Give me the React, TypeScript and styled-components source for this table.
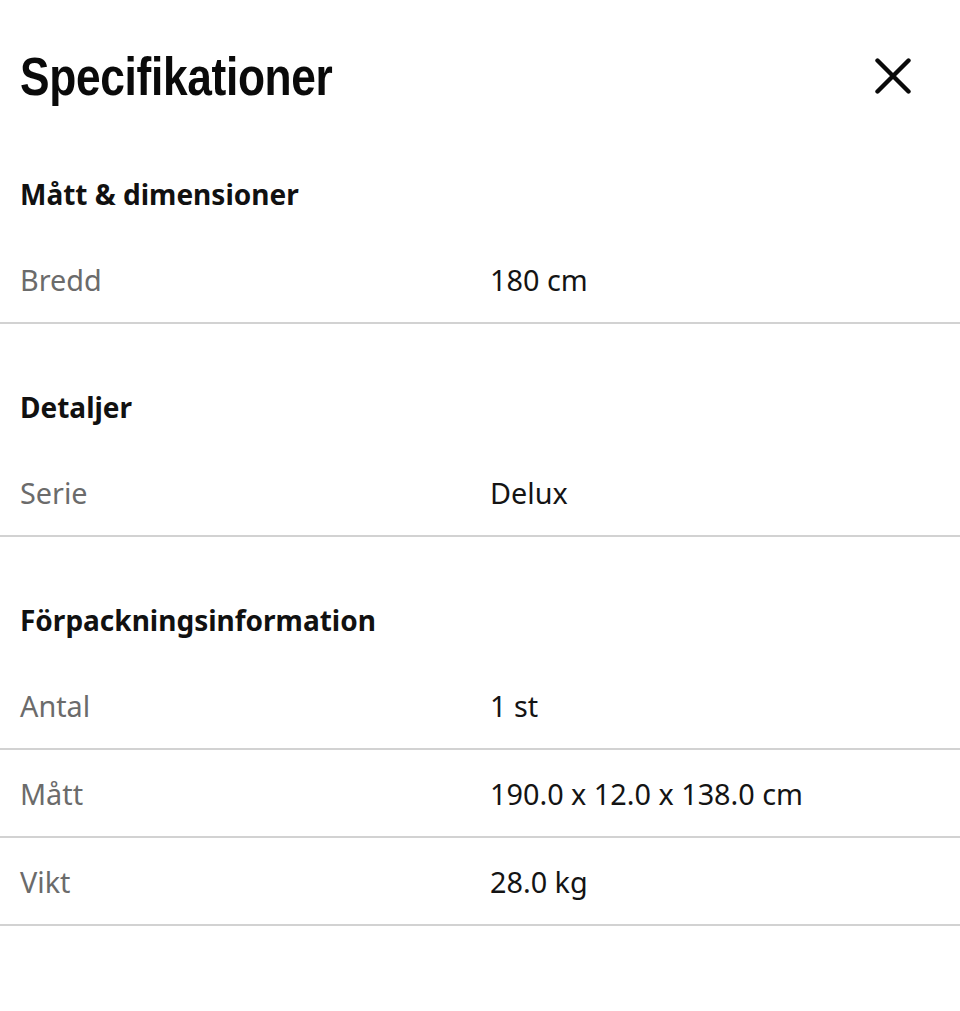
import styled, { createGlobalStyle } from 'styled-components';

const GlobalStyle = createGlobalStyle`
  html, body {
    margin: 0;
    padding: 0;
    background: #ffffff;
  }
  body {
    font-family: "Noto Sans", "Open Sans", sans-serif;
    color: #111111;
  }
`;

const Page = styled.div`
  width: 960px;
  min-height: 1011px;
  background: #ffffff;
`;

const Header = styled.header`
  display: flex;
  align-items: center;
  justify-content: space-between;
  padding: 40px 51px 0 20px;
  height: 71px;
`;

/* no condensed face installed, so squeeze the bold sans horizontally */
const Title = styled.h1`
  margin: 0;
  font-family: "Liberation Sans", Arial, sans-serif;
  font-weight: 700;
  font-size: 54px;
  line-height: 70px;
  letter-spacing: -0.4px;
  color: #0a0a0a;
  transform: scaleX(0.82);
  transform-origin: left center;
`;

const CloseButton = styled.button`
  display: flex;
  align-items: center;
  justify-content: center;
  width: 44px;
  height: 44px;
  margin-right: -6px;
  padding: 0;
  border: none;
  background: transparent;
  cursor: pointer;
  color: #0a0a0a;
`;

const Section = styled.section`
  padding-top: 63px;
`;

const SectionTitle = styled.h2`
  margin: 0 0 22px;
  padding: 0 20px;
  font-size: 28px;
  line-height: 40px;
  font-weight: 700;
  color: #111111;
`;

const Row = styled.div`
  display: grid;
  grid-template-columns: 470px 1fr;
  align-items: center;
  height: 86px;
  padding: 0 20px;
  border-bottom: 2px solid #d2d2d2;
  font-size: 28.8px;
`;

const Label = styled.span`
  color: #6b6b6b;
`;

const Value = styled.span`
  color: #141414;
`;

const sections = [
  {
    title: 'Mått & dimensioner',
    rows: [['Bredd', '180 cm']],
  },
  {
    title: 'Detaljer',
    rows: [['Serie', 'Delux']],
  },
  {
    title: 'Förpackningsinformation',
    rows: [
      ['Antal', '1 st'],
      ['Mått', '190.0 x 12.0 x 138.0 cm'],
      ['Vikt', '28.0 kg'],
    ],
  },
];

export default function App() {
  return (
    <Page>
      <GlobalStyle />
      <Header>
        <Title>Specifikationer</Title>
        <CloseButton aria-label="Stäng">
          <svg width="36" height="36" viewBox="0 0 36 36" fill="none">
            <path
              d="M2.5 2.5 L33.5 33.5 M33.5 2.5 L2.5 33.5"
              stroke="currentColor"
              strokeWidth="4.4"
              strokeLinecap="round"
            />
          </svg>
        </CloseButton>
      </Header>
      {sections.map((section) => (
        <Section key={section.title}>
          <SectionTitle>{section.title}</SectionTitle>
          {section.rows.map(([label, value]) => (
            <Row key={label}>
              <Label>{label}</Label>
              <Value>{value}</Value>
            </Row>
          ))}
        </Section>
      ))}
    </Page>
  );
}
